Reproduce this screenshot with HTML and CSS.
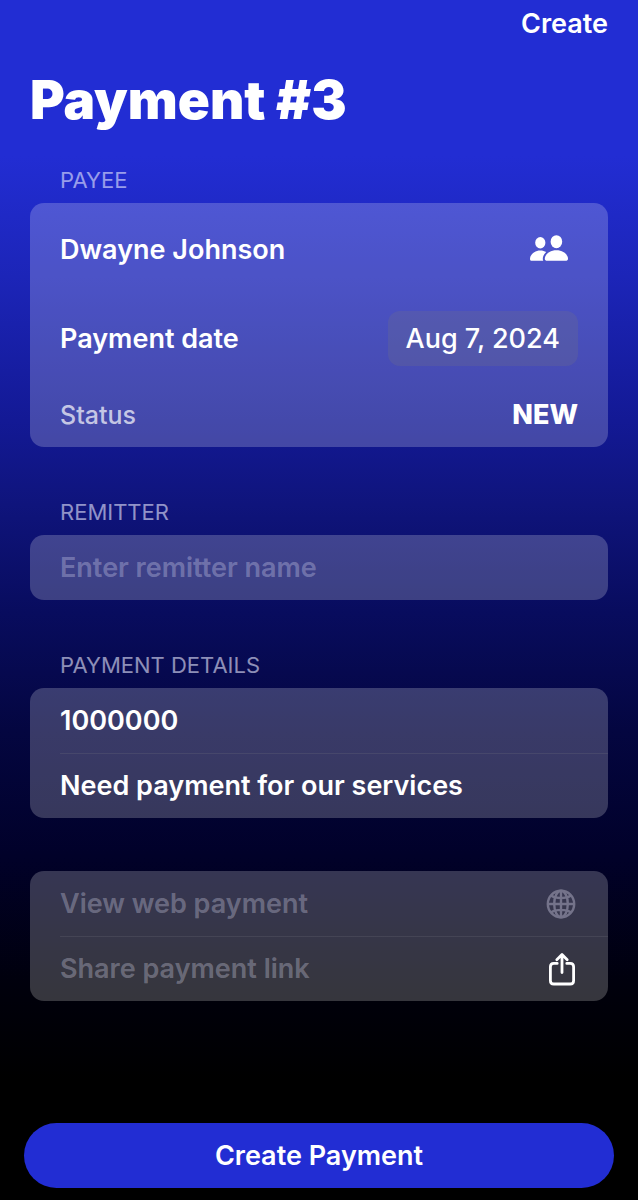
FILE: index.html
```html
<!DOCTYPE html>
<html lang="en">
<head>
<meta charset="utf-8">
<meta name="viewport" content="width=device-width, initial-scale=1">
<title>Payment #3</title>
<link rel="stylesheet" href="styles.css">
</head>
<body>
<form class="screen">
  <header class="toolbar">
    <button type="button" class="toolbar-action">Create</button>
  </header>
  <main class="content">
    <h1 class="title">Payment #3</h1>

    <section class="group">
      <h2 class="group-label">PAYEE</h2>
      <div class="card">
        <div class="row row-payee">
          <span class="row-text">Dwayne Johnson</span>
          <button type="button" class="icon-button" aria-label="Choose payee">
            <svg width="38" height="28" viewBox="0 0 38 28" fill="#fff" aria-hidden="true">
              <ellipse cx="10.300" cy="7.800" rx="5.100" ry="5.700"/>
              <path d="M2 25.800C.7 25.800 0 25.100 0 23.900C0 19.900 4.200 15.500 10.300 15.500C12.600 15.500 14.600 16.100 16.200 17.100C13.800 19.100 12.800 21.600 12.800 23.900C12.800 24.600 13 25.300 13.300 25.800Z"/>
              <ellipse cx="26.400" cy="6.700" rx="5.800" ry="6.500"/>
              <path d="M17.400 25.800C15.700 25.800 14.800 25.200 14.800 23.800C14.800 20 19.200 15.300 26.400 15.300S38 20 38 23.800C38 25.200 37.100 25.800 35.400 25.800Z"/>
            </svg>
          </button>
        </div>
        <div class="row row-date">
          <span class="row-text">Payment date</span>
          <button type="button" class="date-button">Aug 7, 2024</button>
        </div>
        <div class="row">
          <span class="row-status">Status</span>
          <strong class="status-value">NEW</strong>
        </div>
      </div>
    </section>

    <section class="group">
      <label class="group-label" for="remitter">REMITTER</label>
      <div class="card">
        <input class="row field" id="remitter" type="text" placeholder="Enter remitter name">
      </div>
    </section>

    <section class="group">
      <h2 class="group-label">PAYMENT DETAILS</h2>
      <div class="card divided">
        <input class="row field" type="text" inputmode="numeric" aria-label="Amount" value="1000000">
        <input class="row field" type="text" aria-label="Description" value="Need payment for our services">
      </div>
    </section>

    <section class="card divided links">
      <button type="button" class="row link-row">
        <span class="muted">View web payment</span>
        <svg width="30" height="30" viewBox="0 0 30 30" fill="none" stroke="#74738a" stroke-width="2.400" aria-hidden="true">
          <circle cx="15" cy="15" r="13.200"/>
          <ellipse cx="15" cy="15" rx="6.800" ry="13.200"/>
          <path d="M15 1.700V28.300M1.700 15H28.300M4.800 6.600C10 10 20 10 25.200 6.600M4.800 23.400C10 20 20 20 25.200 23.400"/>
        </svg>
      </button>
      <button type="button" class="row link-row">
        <span class="muted">Share payment link</span>
        <svg width="28" height="34" viewBox="0 0 28 34" fill="none" stroke="#fff" stroke-width="2.800" stroke-linecap="round" stroke-linejoin="round" aria-hidden="true">
          <path d="M9.200 11.400H5.800C3.400 11.400 2.400 12.600 2.400 14.700V28.700C2.400 31 3.600 32 5.800 32H22.200C24.400 32 25.600 31 25.600 28.700V14.700C25.600 12.600 24.400 11.400 22.200 11.400H18.800"/>
          <path d="M14 20.500V3M8.800 7.700L14 2.500L19.200 7.700"/>
        </svg>
      </button>
    </section>
  </main>
  <footer class="footer">
    <button type="submit" class="primary">Create Payment</button>
  </footer>
</form>
</body>
</html>
```
FILE: styles.css
```css
* {
  box-sizing: border-box;
}

body {
  margin: 0;
  background: #000;
  color: #fff;
  font-family: Inter, "Liberation Sans", sans-serif;
  font-size: 27px;
  font-weight: 600;
}

button,
input {
  margin: 0;
  padding: 0;
  border: 0;
  background: none;
  color: inherit;
  font: inherit;
}

.screen {
  display: flex;
  flex-direction: column;
  min-height: 100vh;
  background: linear-gradient(#222dd3 0, #222dd3 13%, #1c25b8 23%, #131995 35%, #0f147c 42%, #080c5e 51%, #040640 61%, #01012a 71%, #00000c 82%, #000 90%);
}

.toolbar {
  display: flex;
  justify-content: flex-end;
  padding: 0 30px;
}

.toolbar-action {
  height: 47px;
}

.content {
  flex: 1;
  padding: 0 30px;
}

.title {
  margin: 21px 0 35px;
  font-size: 53px;
  line-height: 64px;
  font-weight: 900;
}

.group {
  margin-bottom: 53px;
}

.group-label {
  display: block;
  margin: 0;
  padding: 0 30px 9px;
  font-size: 22px;
  line-height: 27px;
  font-weight: 400;
  color: rgba(235, 235, 255, 0.6);
}

.group + .group {
  margin-top: -1px;
}

.card {
  border-radius: 14px;
  background: rgba(255, 255, 255, 0.21);
  overflow: hidden;
}

.row {
  display: flex;
  align-items: center;
  justify-content: space-between;
  width: 100%;
  height: 65px;
  padding: 0 30px;
  text-align: left;
}

.row-payee {
  height: 92px;
  padding-right: 40px;
}

.row-date {
  height: 87px;
}

.icon-button {
  display: flex;
}

.date-button {
  height: 55px;
  padding: 0 18px;
  border-radius: 12px;
  background: rgba(118, 118, 128, 0.24);
  font-weight: 500;
}

.row-status {
  font-size: 25px;
  font-weight: 500;
  color: rgba(255, 255, 255, 0.7);
}

.status-value {
  font-weight: 800;
}

.field {
  display: block;
  outline: none;
}

.field::placeholder {
  color: rgba(235, 235, 255, 0.3);
  opacity: 1;
}

.divided .row + .row {
  background: linear-gradient(rgba(120, 120, 130, 0.22), rgba(120, 120, 130, 0.22)) 30px 0 / 100% 1px no-repeat;
}

.muted {
  color: rgba(235, 235, 255, 0.3);
}

.link-row {
  padding-right: 32px;
}

.footer {
  padding: 0 24px 12px;
}

.primary {
  width: 100%;
  height: 65px;
  border-radius: 33px;
  background: #222dd3;
}
```
